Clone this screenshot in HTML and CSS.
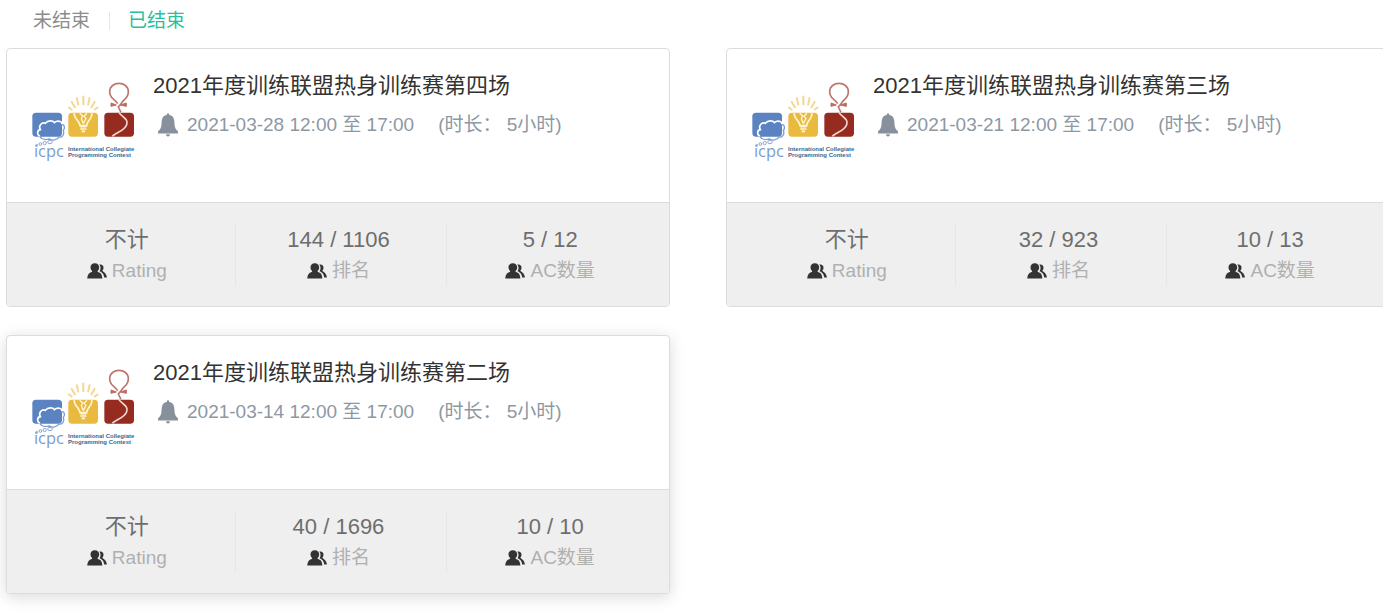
FILE: index.html
```
<!DOCTYPE html>
<html lang="zh-CN">
<head>
<meta charset="utf-8">
<title>训练赛</title>
<link rel="stylesheet" href="styles.css">
</head>
<body>
<svg class="sprite" aria-hidden="true">
  <symbol id="bell" viewBox="0 0 20 24">
    <path d="M9 1.800V.800Q9 .200 10 .200T11 .800V1.800Q15.600 2.600 16.200 7.500L16.800 13.500Q17.200 16.200 20 18.400V20.500H0V18.400Q2.800 16.200 3.200 13.500L3.800 7.500Q4.400 2.600 9 1.800ZM8.200 21.200H11.800V22.600Q10 24.600 8.200 22.600Z"/>
  </symbol>
  <symbol id="people" viewBox="0 0 20 16">
    <path d="M7.800.200C10.600.200 12.200 1.900 12.200 4.200 12.200 5.900 11.500 7 10.600 7.900V8.700L13.200 9.900C14.500 10.700 15 12.500 15.400 15.500H.200C.600 12.500 1.200 10.900 2.500 9.900L5.100 8.700V7.900C4.200 7 3.500 5.900 3.500 4.200 3.500 1.900 5 .200 7.800.200Z"/>
    <path d="M12.300 1.600C14.900 1 16.500 2.500 16.500 4.500 16.500 6 16 7 15.300 7.700L17.400 9.500C19 10.900 19.600 12.300 19.900 14.600H17.300C16.700 11.400 15.800 9.900 12.600 8.300 14 6 13.900 3.400 12.300 1.600Z"/>
  </symbol>
  <symbol id="icpc" viewBox="30 30 324 252">
    <rect x="37" y="128" width="89" height="72" rx="11" fill="#5b83c1"/>
    <rect x="145" y="128" width="89" height="72" rx="11" fill="#eaba40"/>
    <rect x="253" y="128" width="89" height="72" rx="11" fill="#962b20"/>
    <path d="M60 198C50 195 51 180 61 179C54 166 67 155 76 160C84 150 99 151 103 158C112 150 127 153 126 163" fill="none" stroke="#fff" stroke-width="5"/>
    <path d="M126 163C136 165 134 178 130 181C135 194 126 203 117 201C112 210 96 213 89 207C77 210 64 208 60 200" fill="none" stroke="#7d9ed0" stroke-width="4"/>
    <g fill="none" stroke="#8ba9d6" stroke-width="3">
      <ellipse cx="90" cy="216" rx="7" ry="5"/><circle cx="74" cy="219" r="5"/><circle cx="61" cy="222" r="4"/><circle cx="50" cy="226" r="3"/>
    </g>
    <g fill="none" stroke="#f4d792" stroke-width="6">
      <path d="M145 111L157 120M154 94L166 114M170 82L175 106M190 77V105M209 82L204 106M225 94L213 114M235 111L222 120"/>
    </g>
    <path d="M163 129C160 145 179 151 180 167H200C201 151 219 145 215 129M181 170H199M181 177H199M185 184H195" fill="none" stroke="#fff5d7" stroke-width="5"/>
    <path d="M179 130L188 138 184 146 190 161M201 130L192 139 198 145 190 161" fill="none" stroke="#fff5d7" stroke-width="4"/>
    <path d="M293 101C283 85 269 86 269 65C269 32 325 32 325 65C325 87 311 85 302 103L295 111L303 127" fill="none" stroke="#bd7770" stroke-width="5"/>
    <path d="M273 99L289 105 273 109ZM319 99L301 105 319 109Z" fill="#bd6c65" stroke="#bd6c65" stroke-width="3"/>
    <path d="M297 128C309 143 326 147 320 164C313 184 286 187 277 199" fill="none" stroke="#f4d8d3" stroke-width="5"/>
    <text x="42" y="262" class="logo-mark">icpc</text>
    <text x="144" y="244" class="logo-caption">International Collegiate</text>
    <text x="144" y="262" class="logo-caption">Programming Contest</text>
  </symbol>
</svg>

<nav class="tabs">
  <a class="tab" href="#open">未结束</a>
  <a class="tab tab-active" href="#ended" aria-current="page">已结束</a>
</nav>

<main class="contests" id="ended">
  <article class="card">
    <div class="card-body">
      <svg class="logo" role="img" aria-label="ICPC"><use href="#icpc"/></svg>
      <div class="info">
        <h2 class="title">2021年度训练联盟热身训练赛第四场</h2>
        <p class="meta"><svg class="bell" aria-hidden="true"><use href="#bell"/></svg><span>2021-03-28 12:00 至 17:00</span><span class="duration">(时长： 5小时)</span></p>
      </div>
    </div>
    <dl class="stats">
      <div class="stat"><dd class="value">不计</dd><dt class="label"><svg class="people" aria-hidden="true"><use href="#people"/></svg>Rating</dt></div>
      <div class="stat"><dd class="value">144 / 1106</dd><dt class="label"><svg class="people" aria-hidden="true"><use href="#people"/></svg>排名</dt></div>
      <div class="stat"><dd class="value">5 / 12</dd><dt class="label"><svg class="people" aria-hidden="true"><use href="#people"/></svg>AC数量</dt></div>
    </dl>
  </article>

  <article class="card">
    <div class="card-body">
      <svg class="logo" role="img" aria-label="ICPC"><use href="#icpc"/></svg>
      <div class="info">
        <h2 class="title">2021年度训练联盟热身训练赛第三场</h2>
        <p class="meta"><svg class="bell" aria-hidden="true"><use href="#bell"/></svg><span>2021-03-21 12:00 至 17:00</span><span class="duration">(时长： 5小时)</span></p>
      </div>
    </div>
    <dl class="stats">
      <div class="stat"><dd class="value">不计</dd><dt class="label"><svg class="people" aria-hidden="true"><use href="#people"/></svg>Rating</dt></div>
      <div class="stat"><dd class="value">32 / 923</dd><dt class="label"><svg class="people" aria-hidden="true"><use href="#people"/></svg>排名</dt></div>
      <div class="stat"><dd class="value">10 / 13</dd><dt class="label"><svg class="people" aria-hidden="true"><use href="#people"/></svg>AC数量</dt></div>
    </dl>
  </article>

  <article class="card card-raised">
    <div class="card-body">
      <svg class="logo" role="img" aria-label="ICPC"><use href="#icpc"/></svg>
      <div class="info">
        <h2 class="title">2021年度训练联盟热身训练赛第二场</h2>
        <p class="meta"><svg class="bell" aria-hidden="true"><use href="#bell"/></svg><span>2021-03-14 12:00 至 17:00</span><span class="duration">(时长： 5小时)</span></p>
      </div>
    </div>
    <dl class="stats">
      <div class="stat"><dd class="value">不计</dd><dt class="label"><svg class="people" aria-hidden="true"><use href="#people"/></svg>Rating</dt></div>
      <div class="stat"><dd class="value">40 / 1696</dd><dt class="label"><svg class="people" aria-hidden="true"><use href="#people"/></svg>排名</dt></div>
      <div class="stat"><dd class="value">10 / 10</dd><dt class="label"><svg class="people" aria-hidden="true"><use href="#people"/></svg>AC数量</dt></div>
    </dl>
  </article>
</main>
</body>
</html>
```
FILE: styles.css
```
* {
  box-sizing: border-box;
}

body {
  margin: 0;
  overflow-x: hidden;
  background: #fff;
  color: #333;
  font: 19px/30px "Liberation Sans", "Noto Sans CJK SC", sans-serif;
}

h2, p, dl, dd {
  margin: 0;
}

.sprite {
  display: none;
}

.tabs {
  display: flex;
  align-items: center;
  padding: 6px 0 12px 33px;
}

.tab {
  color: #8c8c8c;
  text-decoration: none;
}

.tab-active {
  display: flex;
  align-items: center;
  color: #2abf9c;
}

.tab-active::before {
  content: "";
  width: 1px;
  height: 18px;
  margin: 0 18px 0 19px;
  background: #e6e6e6;
}

/* The right-hand gutter runs past the window edge. */
.contests {
  display: grid;
  grid-template-columns: 1fr 1fr;
  gap: 28px 56px;
  margin: 0 -7px 20px 6px;
}

.card {
  border: 1px solid #dcdcdc;
  border-radius: 4px;
  background: #fff;
  overflow: hidden;
}

.card-raised {
  box-shadow: 0 3px 16px rgba(0, 0, 0, 0.15);
}

.card-body {
  display: flex;
  gap: 15px;
  padding: 20px 23px 38px;
}

.logo {
  flex: none;
  width: 108px;
  height: 84px;
  margin-top: 11px;
}

.logo-mark {
  fill: #7b9ccd;
  font: 49px "Open Sans", sans-serif;
}

.logo-caption {
  fill: #37698f;
  font: bold 18px "Liberation Sans", sans-serif;
}

.title {
  font-size: 22px;
  font-weight: 400;
  line-height: 34px;
}

.meta {
  display: flex;
  align-items: center;
  gap: 9px;
  margin-top: 7px;
  padding-left: 5px;
  color: #8d98a3;
}

.duration {
  margin-left: 15px;
}

.bell {
  width: 20px;
  height: 24px;
  fill: #87919b;
}

.stats {
  display: grid;
  grid-template-columns: repeat(3, 1fr);
  padding: 21px 10px 20px 17px;
  border-top: 1px solid #dcdcdc;
  background: #efefef;
  text-align: center;
}

.stat {
  padding-right: 5px;
  border-right: 1px solid #e6e6e6;
}

.stat:last-child {
  border-right-color: transparent;
}

.value {
  color: #6e6e6e;
  font-size: 22px;
  line-height: 32px;
}

.label {
  display: flex;
  align-items: center;
  justify-content: center;
  gap: 5px;
  color: #b0b0b0;
}

.people {
  width: 20px;
  height: 16px;
  fill: #333;
}
```
